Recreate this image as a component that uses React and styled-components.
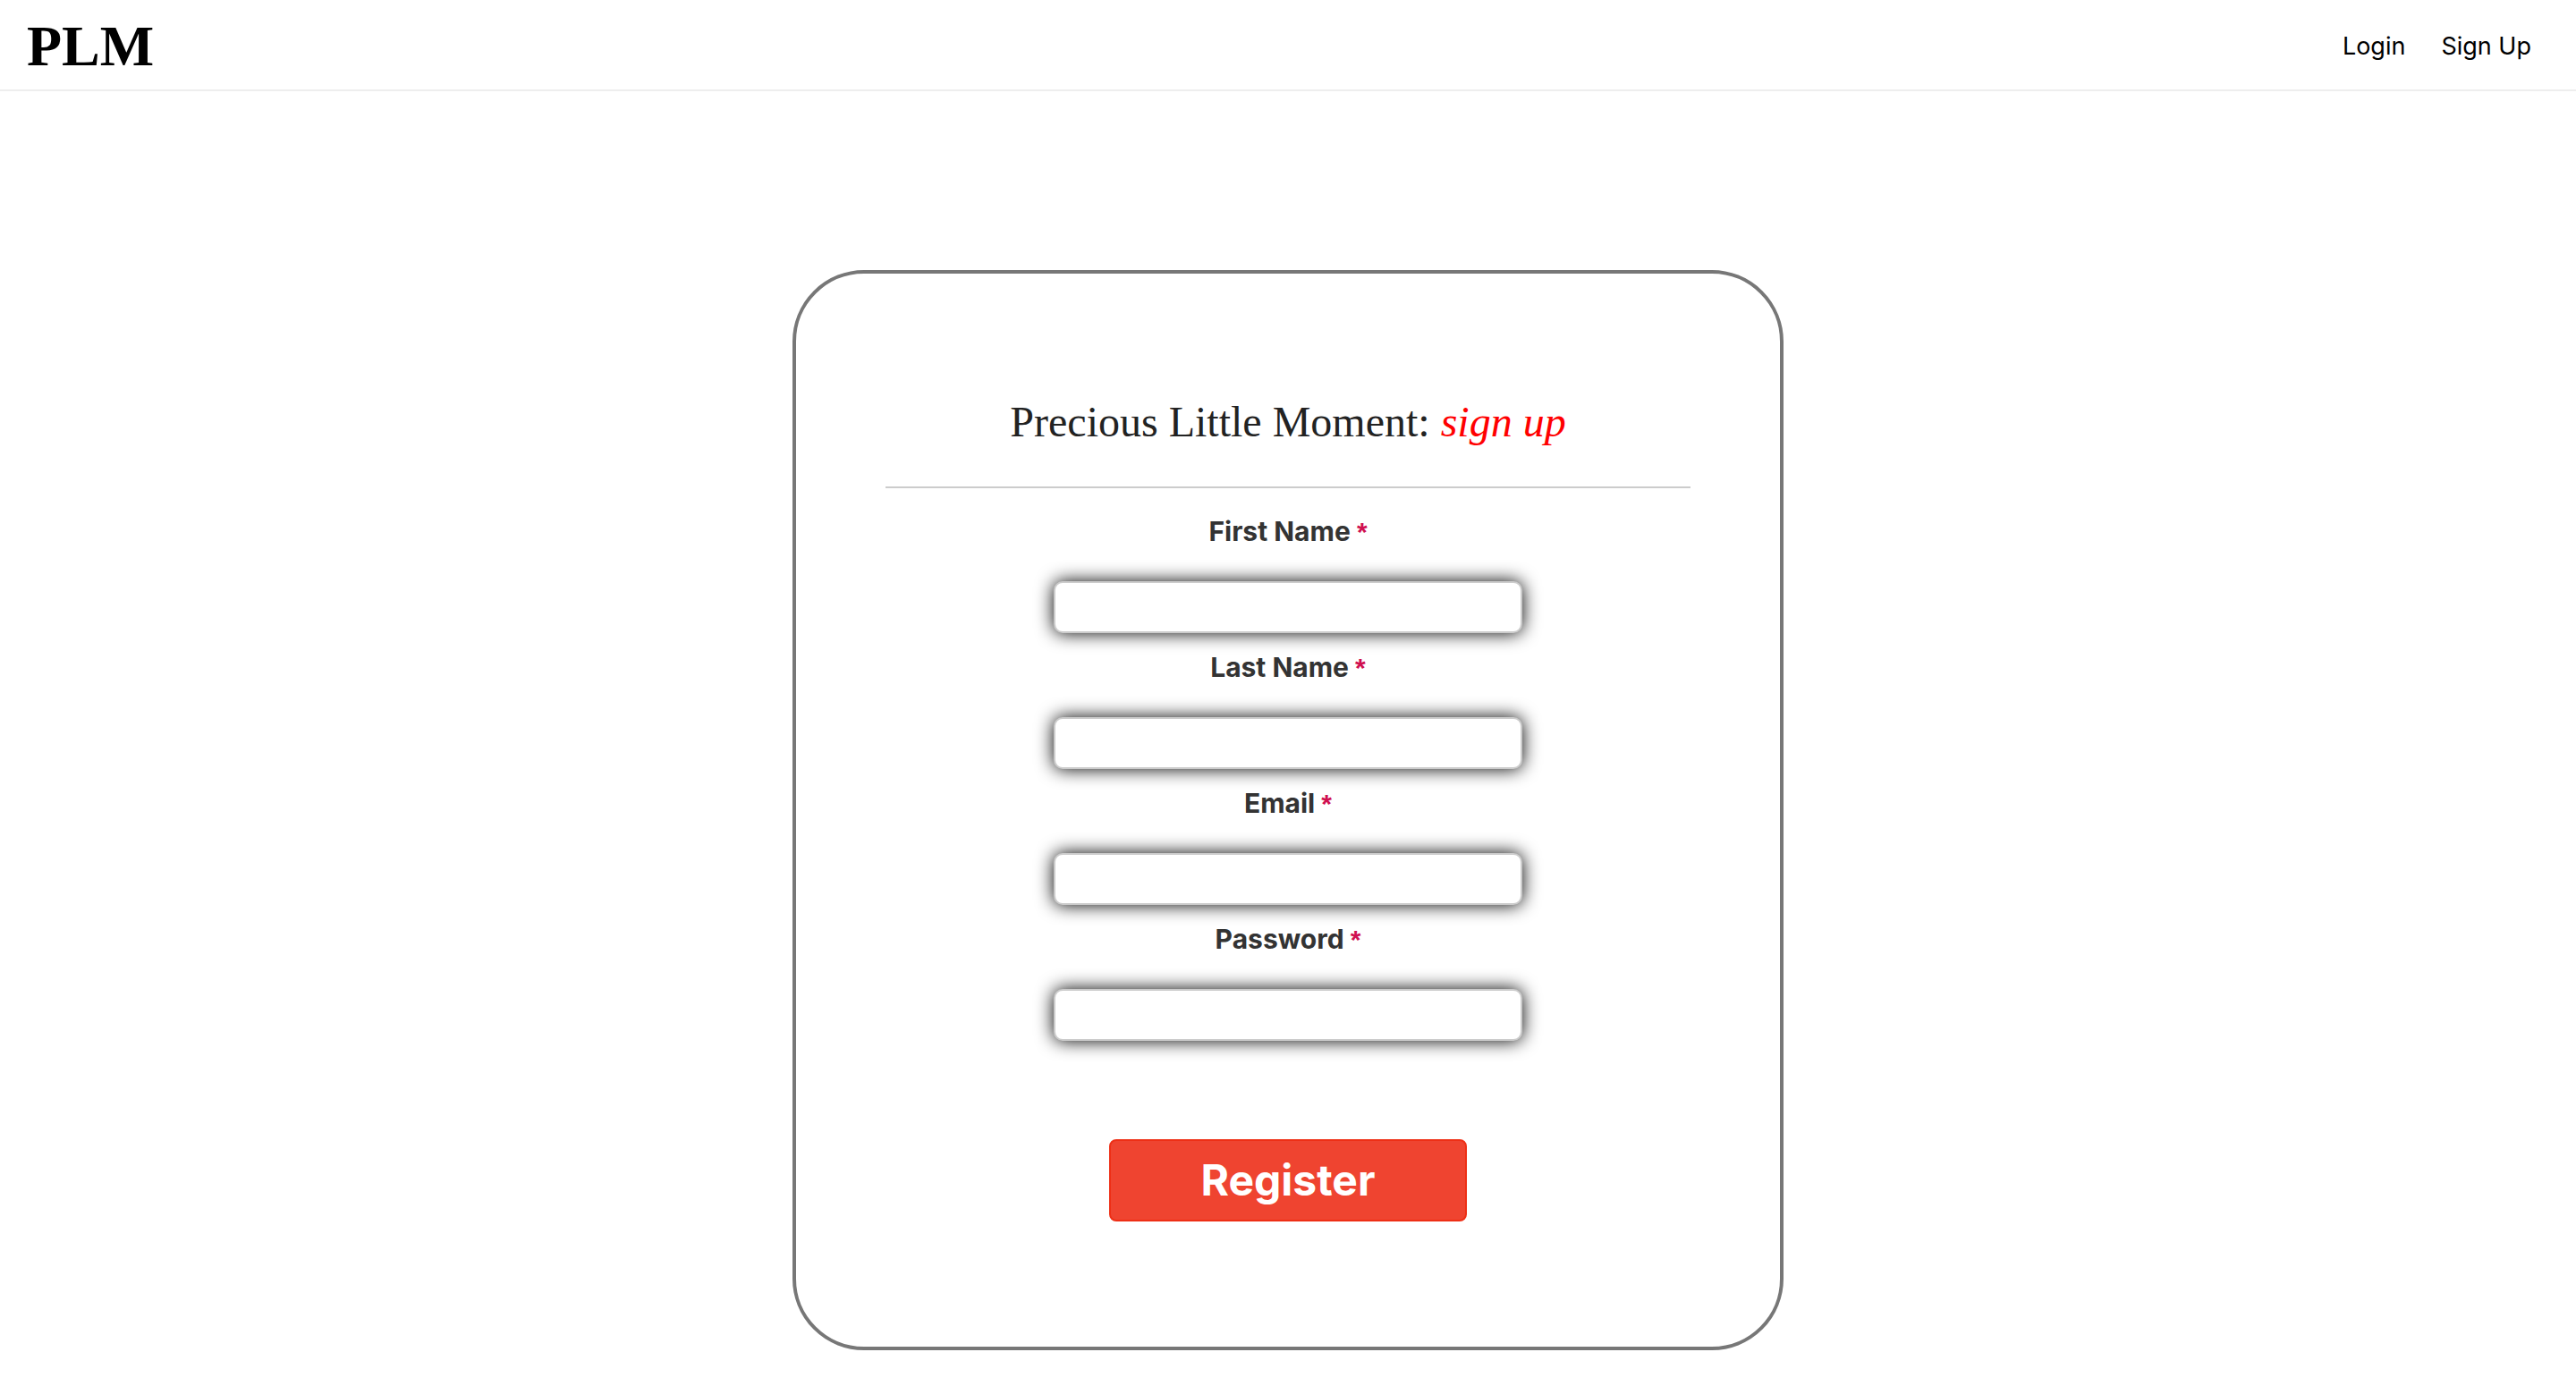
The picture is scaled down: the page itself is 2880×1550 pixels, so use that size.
import React from "react";
import styled, { createGlobalStyle } from "styled-components";

const GlobalStyle = createGlobalStyle`
  * { box-sizing: border-box; }
  body { margin: 0; background: #fff; font-family: Inter, "Liberation Sans", sans-serif; color: #000; }
`;
const Header = styled.header`
  display: flex;
  align-items: center;
  justify-content: space-between;
  height: 102px;
  padding: 4px 50px 0 30px;
  border-bottom: 2px solid #eee;
`;
const Brand = styled.a`
  font: bold 64px/72px "Liberation Serif", serif;
  color: #000;
  text-decoration: none;
`;
const Nav = styled.nav`
  display: flex;
  gap: 40px;
`;
const NavLink = styled.a`
  font-size: 27px;
  line-height: 40px;
  color: #000;
  text-decoration: none;
`;
const Main = styled.main`
  display: flex;
  justify-content: center;
  padding: 200px 24px 40px;
`;
const Card = styled.form`
  display: flex;
  flex-direction: column;
  align-items: center;
  width: 1108px;
  max-width: 100%;
  padding: 132px 100px 140px;
  border: 4px solid #777;
  border-radius: 80px;
`;
const Title = styled.h1`
  width: 100%;
  margin: 0 0 24px;
  padding-bottom: 38px;
  border-bottom: 2px solid #ccc;
  font: 48px/68px "Liberation Serif", serif;
  color: #222;
  text-align: center;
`;
const Accent = styled.em`
  color: #f00;
`;
const Field = styled.div`
  display: flex;
  flex-direction: column;
  align-items: center;
  gap: 32px;
  margin-bottom: 14px;
`;
const Label = styled.label`
  font-size: 30px;
  font-weight: 700;
  line-height: 48px;
  color: #333;
`;
const Required = styled.span`
  font-family: "Liberation Sans", sans-serif;
  line-height: 1;
  color: #d01050;
`;
const Input = styled.input`
  width: 524px;
  max-width: 100%;
  height: 58px;
  padding: 0 16px;
  border: 2px solid #ccc;
  border-radius: 10px;
  background: #fff;
  font: inherit;
  font-size: 27px;
  box-shadow: 0 0 20px #000;
`;
const Button = styled.button`
  width: 400px;
  max-width: 100%;
  height: 92px;
  margin-top: 96px;
  border: 2px solid #ee2f16;
  border-radius: 8px;
  background: #ef4430;
  color: #fff;
  font: 700 48px/60px Inter, "Liberation Sans", sans-serif;
`;

const fields = [
  { id: "first-name", label: "First Name", type: "text" },
  { id: "last-name", label: "Last Name", type: "text" },
  { id: "email", label: "Email", type: "email" },
  { id: "password", label: "Password", type: "password" },
];

export default function App() {
  return (
    <>
      <GlobalStyle />
      <Header>
        <Brand href="#">PLM</Brand>
        <Nav>
          <NavLink href="#login">Login</NavLink>
          <NavLink href="#signup">Sign Up</NavLink>
        </Nav>
      </Header>
      <Main>
        <Card>
          <Title>Precious Little Moment: <Accent>sign up</Accent></Title>
          {fields.map((f) => (
            <Field key={f.id}>
              <Label htmlFor={f.id}>{f.label} <Required>*</Required></Label>
              <Input id={f.id} type={f.type} required />
            </Field>
          ))}
          <Button type="submit">Register</Button>
        </Card>
      </Main>
    </>
  );
}
